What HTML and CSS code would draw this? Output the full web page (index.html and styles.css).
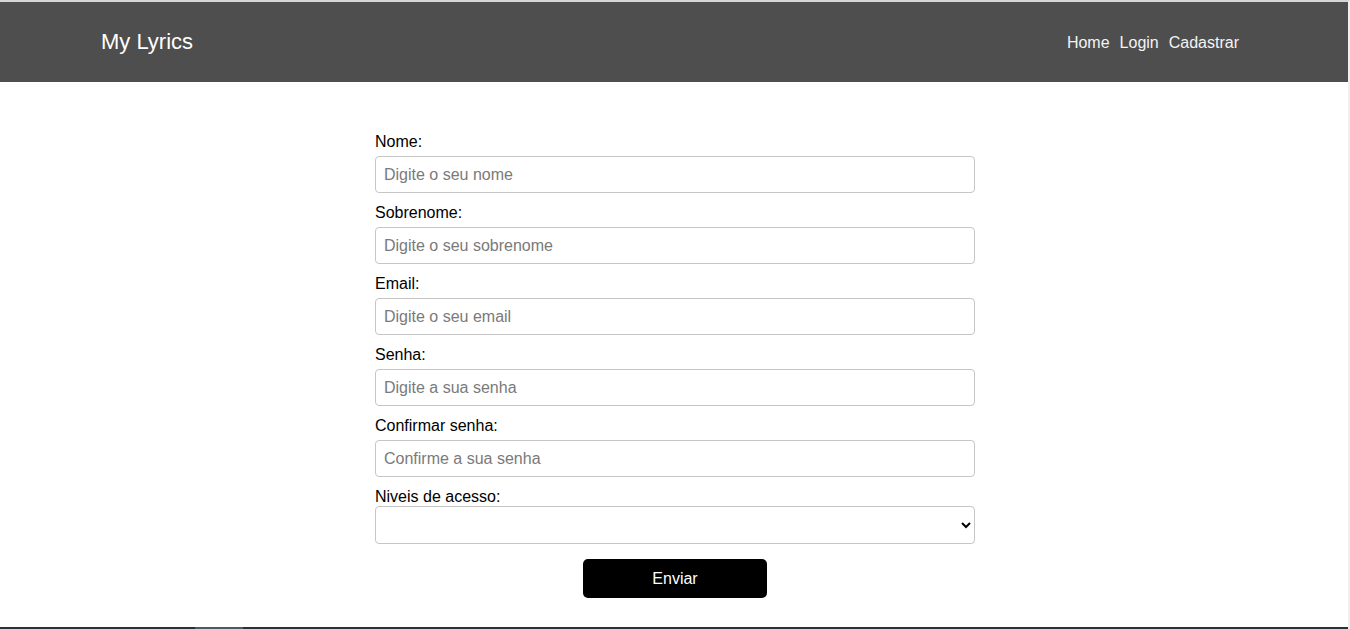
FILE: index.html
```html
<!DOCTYPE html>
<html lang="pt-BR">
<head>
<meta charset="utf-8">
<title>My Lyrics</title>
<link rel="stylesheet" href="styles.css">
</head>
<body>
<div class="page">
  <header class="topbar">
    <div class="brand">My Lyrics</div>
    <nav class="nav">
      <a href="#">Home</a>
      <a href="#">Login</a>
      <a href="#">Cadastrar</a>
    </nav>
  </header>
  <main class="main">
    <form class="form">
      <label class="label" for="nome">Nome:</label>
      <input class="field" id="nome" type="text" placeholder="Digite o seu nome">
      <label class="label" for="sobrenome">Sobrenome:</label>
      <input class="field" id="sobrenome" type="text" placeholder="Digite o seu sobrenome">
      <label class="label" for="email">Email:</label>
      <input class="field" id="email" type="email" placeholder="Digite o seu email">
      <label class="label" for="senha">Senha:</label>
      <input class="field" id="senha" type="password" placeholder="Digite a sua senha">
      <label class="label" for="confirmar">Confirmar senha:</label>
      <input class="field" id="confirmar" type="password" placeholder="Confirme a sua senha">
      <label class="label label-tight" for="nivel">Niveis de acesso:</label>
      <select class="field select" id="nivel">
        <option value=""></option>
      </select>
      <div class="actions">
        <button class="submit" type="button">Enviar</button>
      </div>
    </form>
  </main>
  <footer class="bottombar"><span class="thumb"></span></footer>
</div>
</body>
</html>
```
FILE: styles.css
```css
* { box-sizing: border-box; }
html, body { margin: 0; padding: 0; }
body {
  font-family: "Liberation Sans", Arial, sans-serif;
  color: #000;
  background: #fff;
  overflow: hidden;
}
.page {
  height: 629px;
  display: flex;
  flex-direction: column;
  border-top: 2px solid #d6d6d6;
  border-right: 2px solid #efefef;
}
.topbar {
  height: 80px;
  flex: 0 0 80px;
  background: #4e4e4e;
  display: flex;
  align-items: center;
  justify-content: space-between;
  padding: 0 109px 0 101px;
}
.brand {
  color: #fff;
  font-size: 22px;
  line-height: 26px;
}
.nav {
  display: flex;
  gap: 10px;
  margin-top: 2px;
  padding-left: 1px;
}
.nav a {
  color: #f4f4f4;
  text-decoration: none;
  font-size: 16px;
  line-height: 20px;
}
.main {
  flex: 1;
  padding-top: 50px;
  padding-left: 2px;
}
.form {
  width: 600px;
  margin: 0 auto;
  display: flex;
  flex-direction: column;
}
.label {
  font-size: 16px;
  line-height: 18px;
  padding-top: 1px;
  margin-bottom: 5px;
}
.label-tight { margin-bottom: 0; }
.field {
  height: 37px;
  border: 1px solid #c6c6c6;
  border-radius: 4px;
  padding: 0 8px;
  font-family: "Liberation Sans", Arial, sans-serif;
  font-size: 16px;
  color: #000;
  margin: 0 0 10px 0;
  background: #fff;
  outline: none;
}
.field::placeholder { color: #7a7a7a; }
.select {
  height: 38px;
  margin-bottom: 15px;
}
.actions {
  display: flex;
  justify-content: center;
}
.submit {
  width: 184px;
  height: 39px;
  background: #000;
  color: #fff;
  border: none;
  border-radius: 5px;
  font-family: "Liberation Sans", Arial, sans-serif;
  font-size: 16px;
  cursor: pointer;
}
.bottombar {
  height: 2px;
  flex: 0 0 2px;
  background: #263238;
  position: relative;
}
.thumb {
  position: absolute;
  left: 195px;
  top: 0;
  width: 48px;
  height: 2px;
  background: #4b5c62;
}
```
